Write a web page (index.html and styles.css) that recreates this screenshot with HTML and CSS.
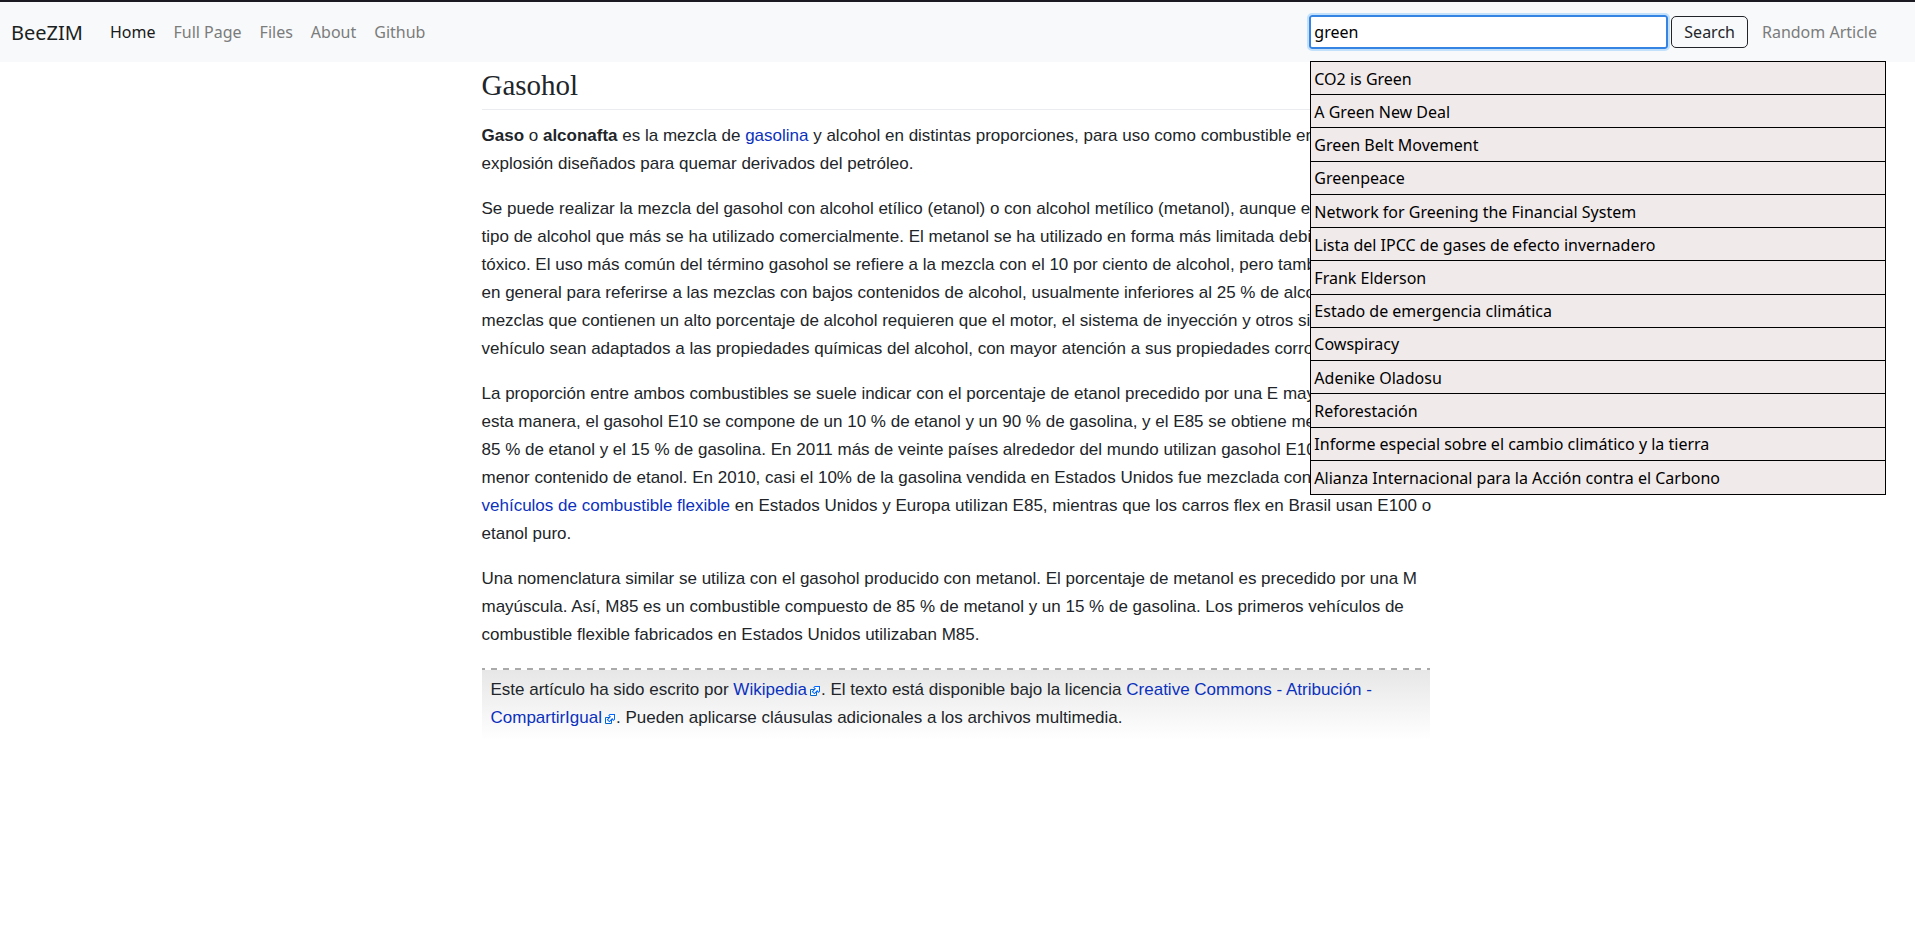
FILE: index.html
```html
<!DOCTYPE html>
<html lang="es">
<head>
<meta charset="utf-8">
<title>BeeZIM - Gasohol</title>
<link rel="stylesheet" href="styles.css">
</head>
<body>
<svg class="sprite" aria-hidden="true">
  <symbol id="external" viewBox="0 0 12 12">
    <path fill="#fff" stroke="#06c" d="M1.5 4.518h5.982V10.5H1.5z"/>
    <path fill="#06f" d="M5.765 1H11v5.39L9.427 7.937l-1.31-1.31L5.393 9.35l-2.69-2.688 2.81-2.808L4.2 2.544z"/>
    <path fill="#fff" d="M9.995 2.004l.022 4.885L8.2 5.07 5.32 7.95 4.09 6.723l2.882-2.88-1.85-1.852z"/>
  </symbol>
</svg>
<header class="navbar">
  <a class="brand" href="#">BeeZIM</a>
  <nav class="links">
    <a class="nav-link active" href="#">Home</a>
    <a class="nav-link" href="#">Full Page</a>
    <a class="nav-link" href="#">Files</a>
    <a class="nav-link" href="#">About</a>
    <a class="nav-link" href="#">Github</a>
  </nav>
  <form class="search">
    <input class="search-input" type="text" aria-label="Search articles" value="green" autocomplete="off">
    <button class="search-button" type="button">Search</button>
    <a class="nav-link" href="#">Random Article</a>
    <ul class="suggestions">
      <li>CO2 is Green</li>
      <li>A Green New Deal</li>
      <li>Green Belt Movement</li>
      <li>Greenpeace</li>
      <li>Network for Greening the Financial System</li>
      <li>Lista del IPCC de gases de efecto invernadero</li>
      <li>Frank Elderson</li>
      <li>Estado de emergencia climática</li>
      <li>Cowspiracy</li>
      <li>Adenike Oladosu</li>
      <li>Reforestación</li>
      <li>Informe especial sobre el cambio climático y la tierra</li>
      <li>Alianza Internacional para la Acción contra el Carbono</li>
    </ul>
  </form>
</header>
<main class="article">
  <h1>Gasohol</h1>
  <p><b>Gaso</b> o <b>alconafta</b> es la mezcla de <a href="#">gasolina</a> y alcohol en distintas proporciones, para uso como combustible en motores de explosión diseñados para quemar derivados del petróleo.</p>
  <p>Se puede realizar la mezcla del gasohol con alcohol etílico (etanol) o con alcohol metílico (metanol), aunque el etanol es el tipo de alcohol que más se ha utilizado comercialmente. El metanol se ha utilizado en forma más limitada debido a que es tóxico. El uso más común del término gasohol se refiere a la mezcla con el 10 por ciento de alcohol, pero también se utiliza en&nbsp;general para referirse a las mezclas con bajos contenidos de alcohol, usualmente inferiores al 25&nbsp;% de alcohol. Las mezclas que contienen un alto porcentaje de alcohol requieren que el motor, el sistema de inyección y otros sistemas del vehículo sean adaptados a las propiedades químicas del alcohol, con mayor atención a sus propiedades corrosivas.</p>
  <p>La proporción entre ambos combustibles se suele indicar con el porcentaje de etanol precedido por una E mayúscula. De esta&nbsp;manera, el gasohol E10 se compone de un 10&nbsp;% de etanol y un 90&nbsp;% de gasolina, y el E85 se obtiene mezclando el 85&nbsp;%&nbsp;de etanol y el 15&nbsp;% de gasolina. En 2011 más de veinte países alrededor del mundo utilizan gasohol E10 o mezclas de menor&nbsp;contenido de etanol. En 2010, casi el 10% de la gasolina vendida en Estados Unidos fue mezclada con etanol. Los <a href="#">vehículos&nbsp;de combustible flexible</a> en Estados Unidos y Europa utilizan E85, mientras que los carros flex en Brasil usan E100 o etanol puro.</p>
  <p>Una nomenclatura similar se utiliza con el gasohol producido con metanol. El porcentaje de metanol es precedido por una M mayúscula. Así, M85 es un combustible compuesto de 85&nbsp;% de metanol y un 15&nbsp;% de gasolina. Los primeros vehículos de combustible flexible fabricados en Estados Unidos utilizaban M85.</p>
  <footer class="license">Este artículo ha sido escrito por <a href="#">Wikipedia<svg class="ext" aria-hidden="true"><use href="#external"/></svg></a>. El texto está disponible bajo la licencia <a href="#">Creative Commons - Atribución - CompartirIgual<svg class="ext" aria-hidden="true"><use href="#external"/></svg></a>. Pueden aplicarse cláusulas adicionales a los archivos multimedia.</footer>
</main>
</body>
</html>
```
FILE: styles.css
```css
* { box-sizing: border-box; }
body {
  margin: 0;
  background: #fff;
  color: #212529;
  font-family: "Noto Sans", sans-serif;
  font-size: 16px;
}
a { text-decoration: none; }
.sprite { position: absolute; width: 0; height: 0; }
.navbar {
  display: flex;
  align-items: center;
  min-height: 62px;
  padding: 0 30px 0 11px;
  border-top: 2px solid #1b1a22;
  background: #f8f9fa;
}
.brand { margin-right: 19px; color: #1c1f22; font-size: 20px; }
.links { display: flex; gap: 2px; }
.nav-link { padding: 8px; color: #7b7c7c; }
.nav-link.active { color: #191a1a; }
.search {
  position: relative;
  display: flex;
  align-items: center;
  margin-left: auto;
}
.search-input {
  width: 359px;
  height: 34px;
  margin-right: 3px;
  padding: 0 3px;
  border: 2px solid #3584e4;
  border-radius: 3px;
  outline: 2px solid #c3e1fb;
  outline-offset: 0;
  background: #fff;
  color: #000;
  font: inherit;
}
.search-button {
  height: 32px;
  margin-right: 6px;
  padding: 0 12px;
  border: 1px solid #212529;
  border-radius: 5px;
  background: transparent;
  color: #212529;
  font: inherit;
}
.suggestions {
  position: absolute;
  top: 48px;
  left: 1px;
  display: grid;
  grid-auto-rows: 1fr;
  width: 576px;
  min-height: 434px;
  margin: 0;
  padding: 0;
  border: 1px solid #000;
  background: #f0eaea;
  color: #000;
  list-style: none;
}
.suggestions li {
  display: flex;
  align-items: center;
  padding: 1px 3px 0;
  border-bottom: 1px solid #000;
}
.suggestions li:last-child { border-bottom: 0; }
.article {
  max-width: 952px;
  margin: 0 auto;
  padding-right: 4px;
  font-family: "Liberation Sans", Arial, sans-serif;
  font-size: 17px;
  line-height: 28px;
}
.article h1 {
  margin: 0 0 12px;
  padding: 5px 0 6px;
  border-bottom: 1px solid #eaecf0;
  font-family: "Liberation Serif", "Times New Roman", serif;
  font-size: 29px;
  font-weight: 400;
  line-height: 36px;
}
.article p { margin: 0 -4px 17px 0; }
.article a { color: #0b31bd; }
.license {
  margin-top: 19px;
  padding: 8px 9px 8px;
  background:
    repeating-linear-gradient(90deg, #aaa 0 3px, #fff 3px 9px, #aaa 9px 12px) top / 100% 2px no-repeat,
    linear-gradient(#e6e6e6, #fff);
}
.ext { width: 12px; height: 12px; margin-left: 2px; vertical-align: -2px; }
```
